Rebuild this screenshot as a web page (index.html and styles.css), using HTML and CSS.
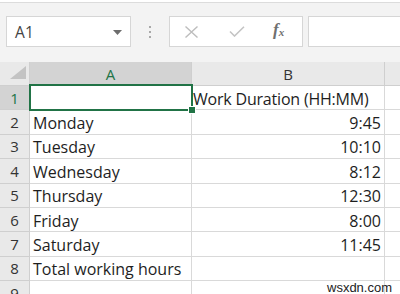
FILE: index.html
```html
<!DOCTYPE html>
<html>
<head>
<meta charset="utf-8">
<link rel="stylesheet" href="styles.css">
</head>
<body>
<div class="app">
  <div class="toolbar">
    <div class="namebox">
      <span class="ref">A1</span>
      <svg class="caret" width="9" height="5" viewBox="0 0 9 5"><path d="M0 0H9L4.5 5Z" fill="#6d6d6d"/></svg>
    </div>
    <div class="dots"><i></i><i></i><i></i></div>
    <div class="buttons">
      <svg class="btn" width="15" height="12" viewBox="0 0 15 12"><path d="M1.5 0.5L13.5 11.5M13.5 0.5L1.5 11.5" stroke="#bdbdbd" stroke-width="1.4" fill="none"/></svg>
      <svg class="btn" width="16" height="11" viewBox="0 0 16 11"><path d="M1 5.5L5.5 10L15 0.8" stroke="#c4c4c4" stroke-width="1.6" fill="none"/></svg>
      <span class="fx">f<sub>x</sub></span>
    </div>
    <div class="input"></div>
  </div>
  <div class="sheet">
    <div class="grid">
      <div class="corner"><svg width="16" height="13" viewBox="0 0 16 13"><path d="M16 0V13H0Z" fill="#c3c3c3"/></svg></div>
      <div class="ch sel">A</div>
      <div class="ch">B</div>
      <div class="ch last"></div>

      <div class="rh sel">1</div><div class="c"></div><div class="c ov">Work Duration (HH:MM)</div><div class="c"></div>
      <div class="rh">2</div><div class="c">Monday</div><div class="c num">9:45</div><div class="c"></div>
      <div class="rh">3</div><div class="c">Tuesday</div><div class="c num">10:10</div><div class="c"></div>
      <div class="rh">4</div><div class="c">Wednesday</div><div class="c num">8:12</div><div class="c"></div>
      <div class="rh">5</div><div class="c">Thursday</div><div class="c num">12:30</div><div class="c"></div>
      <div class="rh">6</div><div class="c">Friday</div><div class="c num">8:00</div><div class="c"></div>
      <div class="rh">7</div><div class="c">Saturday</div><div class="c num">11:45</div><div class="c"></div>
      <div class="rh">8</div><div class="c">Total working hours</div><div class="c"></div><div class="c"></div>
      <div class="rh">9</div><div class="c"></div><div class="c"></div><div class="c"></div>
    </div>
    <div class="selection"><span class="handle"></span></div>
    <div class="watermark">wsxdn.com</div>
  </div>
</div>
</body>
</html>
```
FILE: styles.css
```css
html, body {
  margin: 0;
  padding: 0;
  background: #ffffff;
  overflow: hidden;
}
.app {
  width: 400px;
  height: 294px;
  overflow: hidden;
  font-family: "Open Sans", "Liberation Sans", sans-serif;
}
.toolbar {
  box-sizing: border-box;
  height: 60px;
  margin-top: 2px;
  border-top: 1px solid #dcdcdc;
  background: #f3f3f3;
  display: flex;
  align-items: flex-start;
  padding-top: 13px;
  padding-left: 6px;
}
.namebox {
  box-sizing: border-box;
  width: 125px;
  height: 31px;
  background: #fff;
  border: 1px solid #d6d6d6;
  display: flex;
  align-items: center;
  justify-content: space-between;
  padding: 0 8px 0 8px;
}
.ref {
  font-size: 15.5px;
  color: #444;
  letter-spacing: 0.3px;
}
.caret { margin-top: 1px; }
.dots {
  width: 38px;
  height: 31px;
  display: flex;
  flex-direction: column;
  align-items: center;
  justify-content: center;
  gap: 3px;
}
.dots i {
  display: block;
  width: 2px;
  height: 2px;
  background: #a8a8a8;
}
.buttons {
  box-sizing: border-box;
  width: 134px;
  height: 31px;
  background: #fff;
  border: 1px solid #d6d6d6;
  display: flex;
  align-items: center;
  padding-left: 14px;
}
.buttons .btn:nth-child(1) { margin-right: 30px; }
.buttons .btn:nth-child(2) { margin-right: 28px; }
.fx {
  font-family: "Liberation Serif", serif;
  font-style: italic;
  font-size: 17px;
  color: #707070;
  font-weight: bold;
  margin-top: -3px;
}
.fx sub {
  font-size: 11px;
  vertical-align: -1px;
}
.input {
  box-sizing: border-box;
  flex: 1;
  margin-left: 5px;
  height: 31px;
  background: #fff;
  border: 1px solid #d6d6d6;
  border-right: none;
}
.sheet {
  position: relative;
}
.grid {
  display: grid;
  grid-template-columns: 30px 162px 193px 40px;
  grid-template-rows: 24px repeat(9, 24.4px);
}
.grid > div {
  box-sizing: border-box;
  border-right: 1px solid #d9d9d9;
  border-bottom: 1px solid #d9d9d9;
  font-size: 16px;
  color: #1e1e1e;
  white-space: nowrap;
  display: flex;
  align-items: center;
}
.corner {
  background: #e9e9e9;
  justify-content: flex-end;
  align-items: flex-end !important;
  padding: 0 3px 6px 0;
  border-right-color: #cfcfcf !important;
  border-bottom-color: #cfcfcf !important;
}
.ch {
  background: #e9e9e9;
  justify-content: center;
  font-size: 15px !important;
  color: #333 !important;
  border-right-color: #cfcfcf !important;
  border-bottom-color: #cfcfcf !important;
}
.ch.sel {
  background: #d3d3d3;
  color: #217346 !important;
}
.rh {
  background: #e9e9e9;
  justify-content: center;
  font-size: 15px !important;
  color: #333 !important;
  border-right-color: #cfcfcf !important;
  border-bottom-color: #cfcfcf !important;
}
.rh.sel {
  background: #d3d3d3;
  color: #217346 !important;
}
.c {
  padding-left: 3px;
  padding-top: 2px;
}
.c.ov {
  padding-left: 1px;
  overflow: visible;
  letter-spacing: -0.2px;
}
.c.num {
  justify-content: flex-end;
  padding-right: 3px;
}
.selection {
  position: absolute;
  left: 29px;
  top: 22px;
  width: 160px;
  height: 23px;
  border: 2px solid #217346;
  pointer-events: none;
}
.handle {
  position: absolute;
  right: -5px;
  bottom: -5px;
  width: 6px;
  height: 6px;
  background: #217346;
  border: 1px solid #fff;
}
.watermark {
  position: absolute;
  left: 327px;
  top: 218px;
  font-family: "Liberation Sans", sans-serif;
  font-size: 13px;
  color: #222;
}
```
